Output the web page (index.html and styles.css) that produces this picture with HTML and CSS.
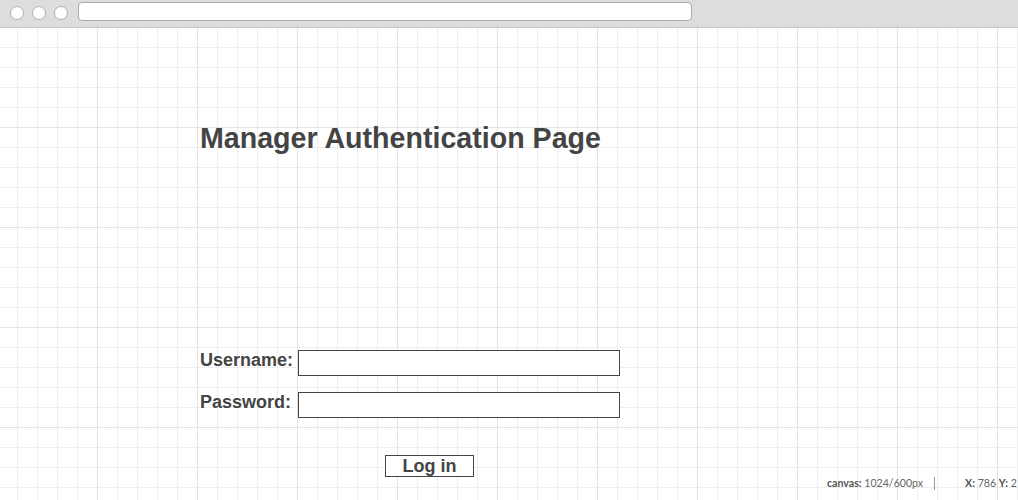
FILE: index.html
```html
<!DOCTYPE html>
<html lang="en">
<head>
<meta charset="utf-8">
<title>Manager Authentication Page</title>
<link rel="stylesheet" href="styles.css">
</head>
<body>
<div class="browser">
  <header class="chrome">
    <span class="dot"></span>
    <span class="dot"></span>
    <span class="dot"></span>
    <div class="address"></div>
  </header>
  <main class="canvas">
    <h1 class="title">Manager Authentication Page</h1>
    <form class="login">
      <div class="row">
        <label class="label" for="user">Username:</label>
        <input class="field" id="user" type="text">
      </div>
      <div class="row">
        <label class="label" for="pass">Password:</label>
        <input class="field" id="pass" type="password">
      </div>
      <button class="submit" type="button">Log in</button>
    </form>
    <div class="status">
      <span class="key">canvas:</span> <span class="val">1024/600px</span><span class="sep"></span><span class="key">X:</span> <span class="val">786</span> <span class="key">Y:</span> <span class="val">2</span>
    </div>
  </main>
</div>
</body>
</html>
```
FILE: styles.css
```css
html, body {
  margin: 0;
  padding: 0;
  background: #ffffff;
}

.browser {
  width: 1018px;
  height: 500px;
  overflow: hidden;
  display: flex;
  flex-direction: column;
}

.chrome {
  height: 27px;
  flex: 0 0 auto;
  background: #dddddd;
  border-bottom: 1px solid #c4c4c4;
  display: flex;
  align-items: flex-start;
  padding-left: 10px;
  gap: 8px;
}

.dot {
  width: 12px;
  height: 12px;
  margin-top: 6px;
  border-radius: 50%;
  background: #ffffff;
  border: 1px solid #b0b0b0;
}

.address {
  margin-top: 2px;
  margin-left: 2px;
  width: 612px;
  height: 17px;
  background: #ffffff;
  border: 1px solid #aaaaaa;
  border-radius: 4px;
}

.canvas {
  position: relative;
  flex: 1 1 auto;
  overflow: hidden;
  padding: 94px 0 0 200px;
  background-color: #ffffff;
  background-image:
    linear-gradient(to right, #e3e3e3 1px, transparent 1px),
    linear-gradient(to bottom, #e3e3e3 1px, transparent 1px),
    linear-gradient(to right, #eeeeee 1px, transparent 1px),
    linear-gradient(to bottom, #eeeeee 1px, transparent 1px);
  background-size: 100px 100px, 100px 100px, 20px 20px, 20px 20px;
  background-position: -3px -1px, -3px -1px, -3px -1px, -3px -1px;
}

.title {
  margin: 0;
  font-family: "Liberation Sans", Arial, sans-serif;
  font-weight: 700;
  font-size: 28.6px;
  line-height: 32px;
  color: #444444;
}

.login {
  margin: 196px 0 0 0;
  display: flex;
  flex-direction: column;
  align-items: flex-start;
  gap: 16px;
}

.row {
  display: flex;
  align-items: flex-start;
}

.label {
  width: 98px;
  font-family: "Liberation Sans", Arial, sans-serif;
  font-weight: 700;
  font-size: 18px;
  line-height: 20px;
  color: #444444;
}

.field {
  box-sizing: border-box;
  width: 322px;
  height: 26px;
  margin: 0;
  padding: 0 4px;
  border: 1px solid #444444;
  border-radius: 0;
  background: #ffffff;
  outline: none;
}

.submit {
  box-sizing: border-box;
  margin: 21px 0 0 185px;
  width: 89px;
  height: 22px;
  padding: 0;
  border: 1px solid #444444;
  border-radius: 0;
  background: #ffffff;
  font-family: "Liberation Sans", Arial, sans-serif;
  font-weight: 700;
  font-size: 18px;
  line-height: 20px;
  color: #444444;
}

.status {
  position: absolute;
  left: 827px;
  top: 448px;
  white-space: nowrap;
  font-family: Lato, "Open Sans", sans-serif;
  font-size: 10.6px;
  line-height: 14px;
  color: #666666;
}

.key {
  font-weight: 700;
  color: #555555;
}

.val {
  color: #666666;
}

.sep {
  display: inline-block;
  width: 1px;
  height: 13px;
  vertical-align: -3px;
  background: #999999;
  margin: 0 30px 0 11px;
}
```
